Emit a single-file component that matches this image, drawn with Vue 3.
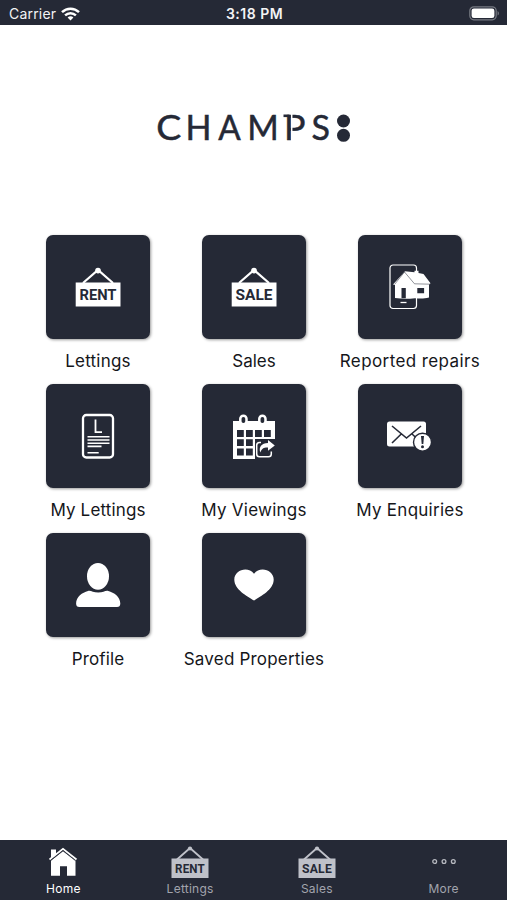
<template>
  <div class="screen">
    <header class="status-bar">
      <div class="carrier">
        <span>Carrier</span>
        <svg width="19" height="14" viewBox="0 0 19 14" fill="none" stroke="#fff" stroke-width="2.5">
          <path d="M1 5.1C5.8.5 13.2.5 18 5.1" />
          <path d="M4.1 8.3c3.1-2.9 7.7-2.9 10.8 0" />
          <path d="M6.6 10.4c1.8-1.4 4-1.4 5.8 0L9.5 13.6z" fill="#fff" stroke="none" />
        </svg>
      </div>
      <div class="time">3:18 PM</div>
      <svg class="battery" width="31" height="15" viewBox="0 0 31 15">
        <rect x=".8" y=".8" width="26.4" height="13" rx="4" fill="none" stroke="#777a83" stroke-width="1.2" />
        <rect x="2.6" y="2.5" width="22.8" height="9.5" rx="2.3" fill="#fff" />
        <path d="M28.6 5v4.6c1.8-.8 1.8-3.8 0-4.6" fill="#777a83" />
      </svg>
    </header>

    <main>
      <svg class="logo" width="200" height="56" viewBox="0 -10 200 56" fill="#252936">
        <g class="logo-text">
          <text x="1.2" y="30.3" textLength="25" lengthAdjust="spacingAndGlyphs">C</text>
          <text x="30.6" y="30.3" textLength="26" lengthAdjust="spacingAndGlyphs">H</text>
          <text x="63.2" y="30.3" textLength="22.5" lengthAdjust="spacingAndGlyphs">A</text>
          <text x="92.300" y="30.3" textLength="31.500" lengthAdjust="spacingAndGlyphs">M</text>
          <text x="129" y="30.3" textLength="21.500" lengthAdjust="spacingAndGlyphs">P</text>
          <text x="156.500" y="30.3" textLength="18.500" lengthAdjust="spacingAndGlyphs">S</text>
        </g>
        <path d="M136.700 3v29" stroke="#fff" stroke-width="1.5" />
        <path d="M128.500 4.500h6v2.600h-6z" />
        <circle cx="188.500" cy="11" r="6.500" />
        <circle cx="188.500" cy="25.300" r="6.500" />
      </svg>

      <div class="grid">
        <a v-for="item in items" :key="item.label" class="item">
          <div class="tile">
            <svg v-if="item.sign" width="46" height="40" viewBox="0 0 46 40">
              <path d="M8 16 23 3l15 13" fill="none" stroke="#fff" stroke-width="2.2" />
              <circle cx="23" cy="3.6" r="2.8" fill="#fff" />
              <path d="M.7 15.5h44.8v24H.7z" fill="#fff" />
              <text class="sign-text" x="4.5" y="32.9" textLength="37" lengthAdjust="spacingAndGlyphs">{{ item.sign }}</text>
            </svg>

            <svg v-else-if="item.icon === 'repairs'" class="repairs" width="46" height="46" viewBox="0 0 46 46">
              <rect x="4" y="1" width="26.5" height="43.5" rx="3" fill="none" stroke="#fff" stroke-width="1.2" />
              <path d="M14.5 38.5h6" stroke="#fff" stroke-width="1.3" />
              <path d="M7 20.5 19 7.2l9.5 1V6.8h4v2.3l5 .8 7 9.3-1.5 1.5v12.8c-5 1.4-9 1.3-14 .7-6.5.7-13 .8-20-.2V21z" fill="#fff" />
              <path d="m18.5 8 10 11.8 15.5.4M18.5 8 8.7 20.3" fill="none" stroke="#252936" stroke-width=".5" />
              <path d="M15.500 24h4.300v10.300h-4.300zM31.300 24h6.800v5.200h-6.800z" fill="#252936" />
            </svg>

            <svg v-else-if="item.icon === 'document'" width="34" height="46" viewBox="0 0 34 46">
              <rect x="2" y="2" width="30" height="42.5" rx="3.3" fill="none" stroke="#fff" stroke-width="2.3" />
              <path d="M14.5 6.5v12.7H21" fill="none" stroke="#fff" stroke-width="1.8" />
              <path d="M6.5 23.8h22M6.5 27h22M6.5 30.2h22M6.5 33.4h14M6.5 39.8h11.2" stroke="#fff" stroke-width="1.6" />
            </svg>

            <svg v-else-if="item.icon === 'calendar'" class="calendar" width="44" height="47" viewBox="0 0 44 47">
              <path d="M2 8h42v18H24v20H2z" fill="#fff" />
              <rect x="9.3" y="2.7" width="6.2" height="8.5" rx="3" fill="#252936" stroke="#fff" stroke-width="2.5" />
              <rect x="28.3" y="2.7" width="6.2" height="8.5" rx="3" fill="#252936" stroke="#fff" stroke-width="2.5" />
              <g fill="#252936">
                <path d="M6 17h6.8v7H6zM15 17h6.8v7H15zM24 17h6.8v7H24zM33 17h6.8v7H33z" />
                <path d="M6 26.2h6.8v6.8H6zM15 26.2h6.8v6.8H15zM6 35.4h6.8v7H6zM15 35.4h6.8v7H15z" />
              </g>
              <path d="M30 29.5h-1.5q-2.8 0-2.8 2.8V41q0 2.8 2.8 2.8h9q2.8 0 2.8-2.8v-2.5" fill="none" stroke="#fff" stroke-width="1.5" />
              <path d="m37 27 6.8 5.400-6.800 5.300v-3.100c-4-.2-6 .8-7.700 5-1.800-5.500 1.100-9.300 7.700-9.500z" fill="#fff" />
            </svg>

            <svg v-else-if="item.icon === 'mail'" class="mail" width="46" height="32" viewBox="0 0 46 32">
              <rect x="1" y="1.5" width="39" height="25" rx="2.5" fill="#fff" />
              <path d="m6 6 14.5 12L35 6M6 23l9-8.800M26 14l6 5.500" fill="none" stroke="#252936" stroke-width="1.6" />
              <circle cx="36.5" cy="22.2" r="9" fill="#fff" stroke="#252936" stroke-width="1.4" />
              <path d="M35 16h3l-.7 8h-1.6z" fill="#252936" />
              <circle cx="36.5" cy="26.8" r="1.5" fill="#252936" />
            </svg>

            <svg v-else-if="item.icon === 'person'" width="46" height="46" viewBox="0 0 46 46" fill="#fff">
              <ellipse cx="23" cy="14.3" rx="11" ry="13.4" />
              <path d="M13 29c2.800-.8 5 1.600 10.200 1.600S30.500 28.200 33.300 29C39 30.400 45.300 35 45.300 41.500c0 2.300-1.100 3.600-3.300 3.600H4.400c-2.200 0-3.300-1.300-3.300-3.600C1.100 35 7.300 30.400 13 29" />
            </svg>

            <svg v-else class="heart" width="40" height="32" viewBox="0 0 40 32" fill="#fff">
              <path d="M20 31.500C13 27 .3 20.700.3 10.500.3 1 13.800-3.400 20 4.700 26.200-3.400 39.700 1 39.700 10.500 39.700 20.700 27 27 20 31.500" />
            </svg>
          </div>
          <span class="label" :style="{ letterSpacing: item.spacing + 'px' }">{{ item.label }}</span>
        </a>
      </div>
    </main>

    <nav class="tab-bar">
      <a v-for="tab in tabs" :key="tab.label" class="tab" :class="{ active: tab.active }">
        <svg v-if="tab.sign" width="38" height="32" viewBox="0 0 38 32">
          <path d="M6 13.500 19 2l13 11.500" fill="none" stroke="#bfc1c9" stroke-width="1.800" />
          <circle cx="19" cy="2.500" r="2.100" fill="#bfc1c9" />
          <path d="M.5 12.500h37v19.500H.5z" fill="#bfc1c9" />
          <text class="tab-sign-text" x="4" y="26.900" textLength="30" lengthAdjust="spacingAndGlyphs">{{ tab.sign }}</text>
        </svg>
        <svg v-else-if="tab.active" width="30" height="32" viewBox="0 0 30 32">
          <path d="M3 3.500h5v5L3 12zM3 14.500 15 5l12.500 9.500v15.300H19v-9.500h-7v9.500H3z" fill="#fff" />
          <path d="M1.500 13.500 15 2.800l13.500 10.700" fill="none" stroke="#fff" stroke-width="1.700" />
          <path d="M2.500 14.700 15 4.800l12.500 9.900" fill="none" stroke="#252936" stroke-width=".8" />
        </svg>
        <svg v-else width="26" height="32" viewBox="0 0 26 32" fill="none" stroke="#b7b9c0" stroke-width="1.300">
          <circle cx="3.700" cy="15.500" r="1.900" />
          <circle cx="13" cy="15.500" r="1.900" />
          <circle cx="22.300" cy="15.500" r="1.900" />
        </svg>
        <span>{{ tab.label }}</span>
      </a>
    </nav>
  </div>
</template>

<script setup>
const items = [
  { label: "Lettings", sign: "RENT", spacing: 0.2 },
  { label: "Sales", sign: "SALE", spacing: 0 },
  { label: "Reported repairs", icon: "repairs", spacing: 0.4 },
  { label: "My Lettings", icon: "document", spacing: 0.15 },
  { label: "My Viewings", icon: "calendar", spacing: 0.25 },
  { label: "My Enquiries", icon: "mail", spacing: 0.25 },
  { label: "Profile", icon: "person", spacing: 0.1 },
  { label: "Saved Properties", icon: "heart", spacing: 0.2 }
]

const tabs = [
  { label: "Home", active: true },
  { label: "Lettings", sign: "RENT" },
  { label: "Sales", sign: "SALE" },
  { label: "More" }
]
</script>

<style>
body {
  margin: 0;
  background: #fff;
}
</style>

<style scoped>
.screen {
  height: 900px;
  display: flex;
  flex-direction: column;
  background: #fff;
  font-family: Inter, "Liberation Sans", sans-serif;
  overflow: hidden;
}

.status-bar {
  height: 25px;
  flex: none;
  box-sizing: border-box;
  padding: 2px 7px 0 9px;
  display: grid;
  grid-template-columns: 1fr auto 1fr;
  align-items: center;
  background: #252936;
  color: #f3f3f5;
  font-size: 14px;
}

.carrier {
  display: flex;
  align-items: center;
  gap: 5px;
  letter-spacing: 0.2px;
}

.time {
  font-weight: 600;
  letter-spacing: 0.5px;
}

.battery {
  justify-self: end;
}

main {
  flex: 1;
}

.logo {
  display: block;
  margin: 75px 0 0 155px;
}

.logo-text {
  font-family: Lato, sans-serif;
  font-size: 35.5px;
  stroke: #252936;
  stroke-width: 0.5px;
}

.grid {
  display: grid;
  grid-template-columns: repeat(3, 156px);
  grid-auto-rows: 149px;
  margin: 79px 0 0 20px;
}

.item {
  display: flex;
  flex-direction: column;
  align-items: center;
}

.tile {
  width: 104px;
  height: 104px;
  flex: none;
  display: flex;
  align-items: center;
  justify-content: center;
  border-radius: 7px;
  background: #252936;
  box-shadow: 1px 1px 3px rgba(0, 0, 0, 0.4);
}

.repairs,
.calendar,
.mail {
  margin-right: 2px;
}

.sign-text,
.tab-sign-text {
  font-family: Roboto, sans-serif;
  font-weight: 700;
  fill: #252936;
}

.sign-text {
  font-size: 15.5px;
}

.tab-sign-text {
  font-size: 13.5px;
}

.label {
  margin-top: 12px;
  line-height: 21px;
  font-size: 17px;
  white-space: nowrap;
  color: #15161a;
}

.tab-bar {
  height: 60px;
  flex: none;
  box-sizing: border-box;
  display: grid;
  grid-template-columns: repeat(4, 1fr);
  padding-top: 6px;
  background: #252936;
}

.tab {
  display: flex;
  flex-direction: column;
  align-items: center;
  gap: 3px;
  font-size: 12px;
  line-height: 16px;
  letter-spacing: 0.25px;
  color: #a2a4ad;
}

.tab.active {
  color: #fff;
}
</style>
